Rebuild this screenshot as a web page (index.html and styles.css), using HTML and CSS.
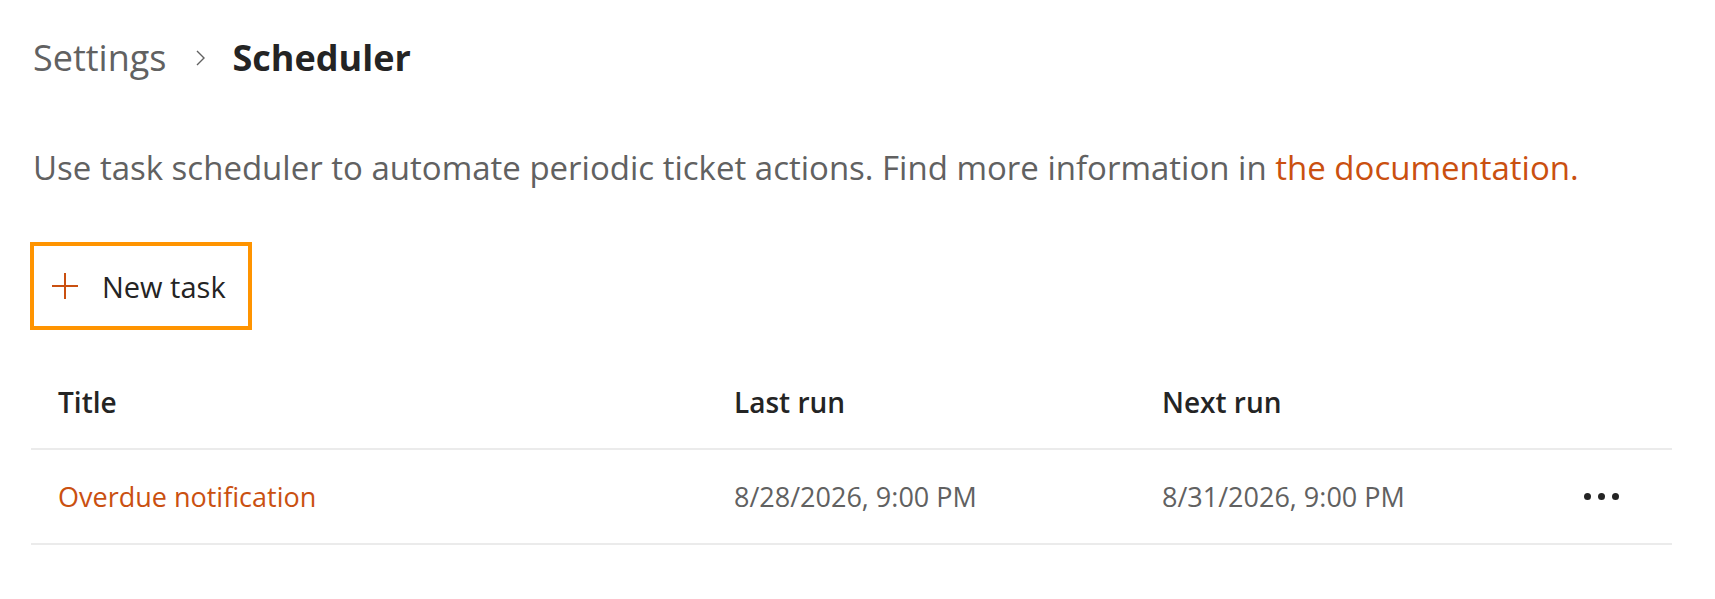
FILE: index.html
```html
<!DOCTYPE html>
<html lang="en">
<head>
<meta charset="utf-8">
<title>Scheduler</title>
<link rel="stylesheet" href="styles.css">
</head>
<body>
<main class="page">
  <nav class="breadcrumb">
    <span class="crumb">Settings</span>
    <svg class="chevron" viewBox="0 0 12 20" width="12" height="20" aria-hidden="true"><path d="M2 3 L9 10 L2 17" fill="none" stroke="#616161" stroke-width="1.4"/></svg>
    <span class="crumb current">Scheduler</span>
  </nav>
  <p class="intro">Use task scheduler to automate periodic ticket actions. Find more information in <a class="link" href="#">the documentation.</a></p>
  <button class="new-task" type="button">
    <svg class="plus" viewBox="0 0 28 28" width="28" height="28" aria-hidden="true"><path d="M14 1 V27 M1 14 H27" stroke="#ca5010" stroke-width="2" fill="none"/></svg>
    <span>New task</span>
  </button>
  <div class="table">
    <div class="row head">
      <div class="cell">Title</div>
      <div class="cell">Last run</div>
      <div class="cell">Next run</div>
      <div class="cell"></div>
    </div>
    <div class="row">
      <div class="cell"><a class="link" href="#">Overdue notification</a></div>
      <div class="cell muted">8/28/2026, 9:00 PM</div>
      <div class="cell muted">8/31/2026, 9:00 PM</div>
      <div class="cell more"><span class="dot"></span><span class="dot"></span><span class="dot"></span></div>
    </div>
  </div>
</main>
</body>
</html>
```

FILE: styles.css
```css
* { box-sizing: border-box; }
html, body { margin: 0; background: #ffffff; }
body {
  font-family: "Open Sans", "Noto Sans", sans-serif;
  color: #242424;
}
.page {
  padding: 32px 43px 0 31px;
}
.breadcrumb {
  display: flex;
  align-items: center;
  height: 52px;
  padding-left: 2px;
}
.crumb {
  font-size: 36px;
  line-height: 52px;
  color: #616161;
}
.crumb.current {
  color: #242424;
  font-weight: 700;
}
.chevron {
  margin: 0 26px 0 28px;
}
.intro {
  margin: 62px 0 0 2px;
  font-size: 33px;
  line-height: 44px;
  color: #616161;
}
.link {
  color: #ca5010;
  text-decoration: none;
}
.new-task {
  display: flex;
  align-items: center;
  margin-top: 52px;
  margin-left: -1px;
  width: 222px;
  height: 88px;
  padding: 0 0 0 17px;
  border: 4px solid #ff9400;
  background: #ffffff;
  font-family: inherit;
  font-size: 29px;
  color: #242424;
  cursor: pointer;
}
.new-task .plus {
  margin-right: 23px;
}
.table {
  margin-top: 20px;
}
.row {
  display: grid;
  grid-template-columns: 676px 428px 1fr 120px;
  align-items: center;
  height: 95px;
  border-bottom: 2px solid #ebebeb;
}
.row.head {
  height: 100px;
  padding-top: 6px;
}
.cell {
  padding-left: 27px;
  font-size: 27px;
  line-height: 36px;
}
.head .cell {
  font-size: 28px;
  font-weight: 600;
  color: #242424;
}
.muted {
  color: #616161;
}
.more {
  display: flex;
  gap: 7px;
  padding-left: 32px;
}
.dot {
  width: 7px;
  height: 7px;
  border-radius: 50%;
  background: #242424;
}
```
